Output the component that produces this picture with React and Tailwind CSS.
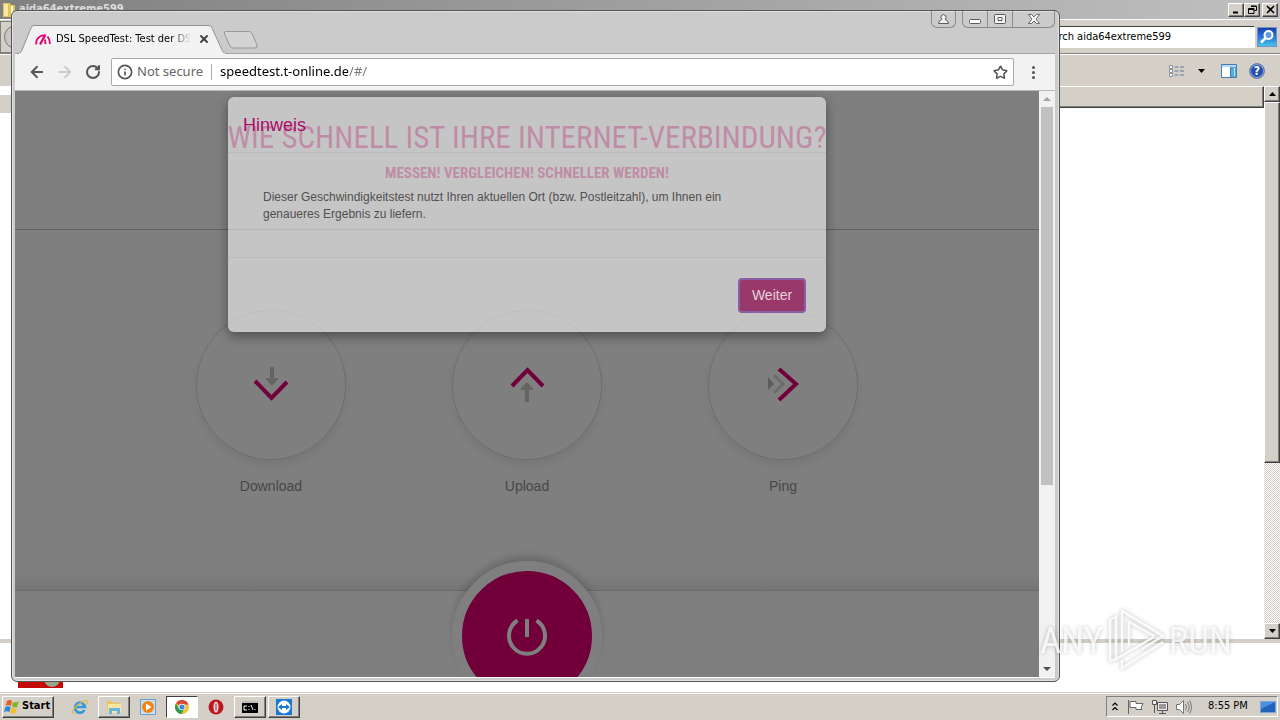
import React from 'react';
import { RotateCw, ArrowLeft, ArrowRight, Star, Info, X } from 'lucide-react';

const raised = 'bg-[#d4d0c8] border border-t-white border-l-white border-r-[#404040] border-b-[#404040] shadow-[inset_-1px_-1px_0_#808080]';

function CaptionButton({ label, children }) {
  return (
    <button aria-label={label} className={`flex h-[14px] w-4 items-center justify-center ${raised}`}>
      <svg className="h-[9px] w-[9px]" viewBox="0 0 9 9" fill="none" stroke="#000">{children}</svg>
    </button>
  );
}

function ScrollButton({ label, down }) {
  return (
    <button aria-label={label} className={`flex h-4 w-4 shrink-0 items-center justify-center ${raised}`}>
      <svg className="h-1 w-[7px]" viewBox="0 0 7 4"><path d={down ? 'M0 0H7L3.5 4Z' : 'M0 4H7L3.5 0Z'} /></svg>
    </button>
  );
}

function ExplorerWindow() {
  return (
    <section className="flex min-h-0 flex-1 flex-col bg-[#d4d0c8] font-['DejaVu_Sans_Condensed','DejaVu_Sans',sans-serif] text-[11px]">
      <header className="flex h-[19px] shrink-0 items-center gap-1 bg-linear-to-r from-[#808080] to-[#c0c0c0] pr-0.5 pl-[3px]">
        <svg className="h-4 w-3" viewBox="0 0 12 16"><path d="M0 1h7l1 2h4v12H0z" fill="#e2c35a" /><path d="M1 2h4v12H1z" fill="#f8e9a0" /><path d="M8 4h2v10H8z" fill="#fff7cf" /></svg>
        <h2 className="flex-1 font-bold text-[#dcdcdc]">aida64extreme599</h2>
        <div className="flex">
          <CaptionButton label="Minimize"><path d="M1 7.5h5" strokeWidth="2" /></CaptionButton>
          <CaptionButton label="Restore"><path d="M3 1h5.500M3 1.500h5.500v4h-2M.5 3.500h5.500v5H.5zM.5 4.500h5.500" /></CaptionButton>
          <span className="w-0.5" />
          <CaptionButton label="Close"><path d="M1 1l7 7M8 1l-7 7" strokeWidth="1.600" /></CaptionButton>
        </div>
      </header>
      <div className="flex h-[35px] shrink-0 items-center border-t border-b border-t-white border-b-[#808080] pr-[3px]">
        <button aria-label="Back" className="flex h-8 w-8 items-center justify-center border border-[#808080]"><span className="block h-6 w-6 rounded-full border border-[#777] bg-[#c8c6c0]" /></button>
        <input aria-label="Search" defaultValue="Search aida64extreme599" className="ml-auto h-[22px] w-[240px] border border-t-[#404040] border-r-white border-b-white border-l-[#404040] bg-white pl-6 text-black outline-none" />
        <button aria-label="Run search" className="ml-0.5 flex h-5 w-5 items-center justify-center border border-[#6e93c8] bg-linear-to-b from-[#1d3fae] via-[#2e72dc] to-[#49c5e8]">
          <svg className="h-4 w-4" viewBox="0 0 16 16" fill="#5b9bea" stroke="#fff" strokeWidth="2"><circle cx="9.500" cy="6" r="4" /><path d="M6.500 9L2 13.500" strokeWidth="2.500" /></svg>
        </button>
      </div>
      <div className="flex h-8 shrink-0 items-center justify-end border-t border-white pr-[15px]">
        <button aria-label="Change view" className="flex items-center gap-[13px]">
          <svg className="h-3 w-4" viewBox="0 0 16 12" fill="none"><path d="M.5 .5h3v3h-3zM.5 4.500h3v3h-3zM.5 8.500h3v3h-3z" stroke="#8c929c" fill="#fff" /><path d="M5.500 2h4M11 2h4M5.500 6h4M11 6h4M5.500 10h4M11 10h4" stroke="#61789b" /></svg>
          <svg className="h-1 w-[7px]" viewBox="0 0 7 4"><path d="M0 0H7L3.500 4Z" /></svg>
        </button>
        <button aria-label="Preview pane" className="ml-4">
          <svg className="h-[14px] w-4" viewBox="0 0 16 14"><path d="M.5 .5h15v13H.5z" fill="#fff" stroke="#3f7cb8" /><path d="M1 1h14v2H1z" fill="#b9d7ee" /><path d="M10 3h5v10h-5z" fill="#55acd8" /><path d="M9.500 3v10" stroke="#3f7cb8" /><path d="M13 4h1v8h-1z" fill="#b8e3f4" /></svg>
        </button>
        <button aria-label="Help" className="ml-3 flex h-4 w-4 items-center justify-center rounded-full border border-[#7385ad] bg-[#2450ad] text-[12px] font-bold text-white shadow-[inset_0_0_0_1px_#8da6d8]">?</button>
      </div>
      <div className="flex min-h-0 flex-1 bg-white">
        <aside className="w-[11px] pt-[9px]"><div className="h-[18px] bg-[#d4d0c8]" /></aside>
        <div className="flex-1"><div className="h-[22px] border-t border-r border-b border-t-white border-r-[#404040] border-b-[#404040] bg-[#d4d0c8] shadow-[inset_-1px_-1px_0_#808080]" /></div>
        <div className="flex w-4 flex-col bg-[conic-gradient(#fff_25%,#d4d0c8_25%_50%,#fff_50%_75%,#d4d0c8_75%)] bg-size-[2px_2px]">
          <ScrollButton label="Scroll up" />
          <div className={`h-[361px] ${raised}`} />
          <div className="flex-1" />
          <ScrollButton label="Scroll down" down />
        </div>
      </div>
      <footer className="flex h-[53px] shrink-0 items-start border-t-4 border-[#d4d0c8] bg-white pl-[18px]">
        <svg className="h-[45px] w-[45px]" viewBox="0 0 45 45"><path d="M0 0h45v45H0z" fill="#c40808" /><circle cx="34" cy="36" r="8" fill="#97a58b" /></svg>
      </footer>
    </section>
  );
}

function BrowserTabs() {
  const cap = 'flex items-center justify-center border-r border-[#8b8b8b] last:border-r-0';
  return (
    <div className="flex h-[42px] shrink-0 items-end">
      <div className="relative ml-[6px] flex h-7 w-[208px] items-center">
        <svg className="absolute inset-0 h-[29px] w-[208px]" viewBox="0 0 208 29" fill="none"><path d="M0 28.500C3 28 3 27 4 25L13 3Q14 .5 16 .5H191Q193 .5 194 3L204 25Q205 28 208 28.500" fill="#f2f2f2" stroke="#929292" /><path d="M1 28.500h206" stroke="#f2f2f2" /></svg>
        <svg className="relative ml-[17px] h-4 w-4" viewBox="0 0 16 16" fill="none" stroke="#e20074" strokeWidth="1.800"><path d="M1.200 13.500Q.8 8 5 5.500Q7 4.300 9 4.500" /><path d="M5 13.500L10.500 3.500" strokeWidth="2.200" /><path d="M10 8.500L10.500 13M12.500 5.500Q14.800 8 15 13" /></svg>
        <span className="relative ml-[5px] bg-linear-to-r from-black from-85% to-transparent bg-clip-text text-[11px] whitespace-nowrap text-transparent">DSL SpeedTest: Test der DS</span>
        <button aria-label="Close tab" className="relative mr-4 ml-auto"><X className="h-3 w-3 text-[#444]" strokeWidth={4} /></button>
      </div>
      <button aria-label="New tab" className="mb-1 -ml-[3px]"><svg className="h-[18px] w-9" viewBox="0 0 36 18"><path d="M3 .5H26Q28 .5 29 2.500L34 14Q35 17 32 17H10Q8 17 7 15L1.500 3Q.5 .5 3 .5Z" fill="#d3d3d3" stroke="#989898" /></svg></button>
      <div className="mr-1 ml-auto flex gap-[6px] self-start text-[#5b5b5b]">
        <button aria-label="Profile" className="flex h-[17px] w-[25px] items-center justify-center rounded-b-md border border-t-0 border-[#8b8b8b]"><svg className="h-[10px] w-[11px]" viewBox="0 0 11 10" fill="#f1f1f1" stroke="currentColor"><path d="M3.800 5.500Q2.500 3.500 3.200 1.800Q5.500-.8 7.800 1.800Q8.500 3.500 7.200 5.500Q10.500 6.500 10.500 9.500H.5Q.5 6.500 3.800 5.500Z" /></svg></button>
        <div className="flex h-[17px] rounded-b-md border border-t-0 border-[#8b8b8b]">
          <button aria-label="Minimize" className={`w-[25px] ${cap}`}><svg className="h-[10px] w-3" viewBox="0 0 12 10"><rect x=".5" y="5.500" width="11" height="4" rx="1" fill="#fff" stroke="currentColor" /></svg></button>
          <button aria-label="Maximize" className={`w-[25px] ${cap}`}><svg className="h-[10px] w-3" viewBox="0 0 12 10" fill="#f1f1f1" stroke="currentColor"><rect x=".5" y=".5" width="11" height="9" rx="1" /><path d="M4 3.500h4v3H4z" /></svg></button>
          <button aria-label="Close" className={`w-[41px] ${cap}`}><svg className="h-[10px] w-3" viewBox="0 0 12 10"><path d="M.5 .5h3L6 3 8.500.5h3L8 5l3.500 4.500h-3L6 7 3.500 9.500h-3L4 5Z" fill="#fff" stroke="currentColor" strokeWidth=".9" /></svg></button>
        </div>
      </div>
    </div>
  );
}

function AddressBar() {
  return (
    <div className="flex h-[37px] shrink-0 items-center border-b border-[#b8b8b8] bg-[#f2f2f2] pr-[19px] pl-[13px] text-[#555]">
      <button aria-label="Back"><ArrowLeft className="h-[18px] w-[18px]" strokeWidth={2.5} /></button>
      <button aria-label="Forward" className="ml-[10px] text-[#ccc]"><ArrowRight className="h-[18px] w-[18px]" strokeWidth={2.5} /></button>
      <button aria-label="Reload" className="ml-[11px]"><RotateCw className="h-4 w-4" strokeWidth={3} /></button>
      <div className="ml-[10px] flex h-7 flex-1 items-center rounded-xs border border-[#a9a9a9] bg-white px-[5px] font-['Noto_Sans','Open_Sans',sans-serif] text-[13px]">
        <Info className="h-4 w-4" strokeWidth={2.5} />
        <label htmlFor="url" className="ml-1 text-[#666]">Not secure</label>
        <span className="ml-2 h-4 w-px bg-[#aaa]" />
        <input id="url" defaultValue="speedtest.t-online.de/#/" className="ml-2 flex-1 bg-[linear-gradient(to_right,#000_128px,#777_128px)] bg-clip-text text-transparent outline-none" />
        <button aria-label="Bookmark"><Star className="h-[15px] w-[15px]" strokeWidth={2.5} /></button>
      </div>
      <button aria-label="Menu" className="ml-4 flex w-[6px] flex-col items-center gap-0.5"><span className="h-[3px] w-[3px] rounded-full bg-[#555]" /><span className="h-[3px] w-[3px] rounded-full bg-[#555]" /><span className="h-[3px] w-[3px] rounded-full bg-[#555]" /></button>
    </div>
  );
}

function Gauge({ label, children }) {
  return (
    <div className="flex flex-1 flex-col items-center gap-4">
      <div className="flex h-[150px] w-[150px] items-center justify-center rounded-full border border-[#dcdcdc] bg-white shadow-[0_5px_10px_rgba(0,0,0,0.08)]">
        <svg className="h-9 w-9" viewBox="0 0 36 36" fill="none">{children}</svg>
      </div>
      <span className="text-[14px] leading-5 text-[#909090]">{label}</span>
    </div>
  );
}

function SpeedTestPage() {
  return (
    <main className="h-full overflow-hidden bg-white text-center font-['Liberation_Sans',Arial,sans-serif]">
      <header className="h-[139px] border-b border-[#c0c0c0] pt-[29px] text-[#e20074]">
        <h1 className="font-['Roboto_Condensed',Roboto,sans-serif] text-[31px] leading-9 whitespace-nowrap">WIE SCHNELL IST IHRE INTERNET-VERBINDUNG?</h1>
        <p className="mt-[7px] font-['Roboto_Condensed',Roboto,sans-serif] text-[15px] leading-5 font-bold">MESSEN! VERGLEICHEN! SCHNELLER WERDEN!</p>
      </header>
      <section className="flex h-[361px] justify-center border-b border-[#d4d4d4] bg-linear-to-t from-[#eaeaea] to-white to-[16px] pt-20">
        <div className="flex w-full max-w-3xl">
          <Gauge label="Download"><path d="M2 14L18.500 31L34 15" stroke="#e20074" strokeWidth="4" /><path d="M17 -1h4v12h5l-7 8-7-8h5z" fill="#c8c8c8" /></Gauge>
          <Gauge label="Upload"><path d="M3 19L18.500 3L34 19" stroke="#e20074" strokeWidth="4" /><path d="M16 35h4V23h5l-7-8-7 8h5z" fill="#c8c8c8" /></Gauge>
          <Gauge label="Ping"><path d="M14 2L31 17L14 33" stroke="#e20074" strokeWidth="4" /><path d="M9 8l9 9-9 9" stroke="#d4d4d4" strokeWidth="2.500" /><path d="M3 10l6 7-6 6z" fill="#b8b8b8" /></Gauge>
        </div>
      </section>
      <section className="flex justify-center">
        <button aria-label="Start test" className="relative -mt-[30px] flex h-[150px] w-[150px] items-center justify-center rounded-full border-10 border-white bg-[#e20074] shadow-[0_-6px_10px_-2px_rgba(0,0,0,0.22)]">
          <svg className="h-10 w-10" viewBox="0 0 40 40" fill="none" stroke="#fff" strokeWidth="4"><path d="M10.500 4.500A18 18 0 1 0 29.500 4.500M20 3v18" /></svg>
        </button>
      </section>
    </main>
  );
}

function NoticeDialog() {
  return (
    <div className="absolute inset-0 flex items-start justify-center bg-black/50 pt-[6px] font-['Liberation_Sans',Arial,sans-serif]">
      <div role="dialog" aria-labelledby="notice-title" className="w-[598px] max-w-full rounded-md bg-white/55 text-[#505050] shadow-[0_4px_12px_rgba(0,0,0,0.4)]">
        <h2 id="notice-title" className="h-14 border-b border-black/6 px-[15px] text-[18px] leading-[56px] text-[#ab0a67]">Hinweis</h2>
        <p className="h-[105px] border-b border-black/6 px-[35px] pt-9 text-[12px] leading-[17px]">Dieser Geschwindigkeitstest nutzt Ihren aktuellen Ort (bzw. Postleitzahl), um Ihnen ein<br />genaueres Ergebnis zu liefern.</p>
        <div className="flex h-[74px] items-center justify-end px-5"><button className="h-[35px] w-[68px] rounded-sm border-2 border-[#8a5fa3] bg-[#99396b] text-[14px] text-[#e6d3de]">Weiter</button></div>
      </div>
    </div>
  );
}

function BrowserWindow() {
  return (
    <section className="absolute top-[10px] right-[220px] bottom-[38px] left-[11px] flex flex-col rounded-md border border-[#555] bg-[#cbcbcb] font-['DejaVu_Sans_Condensed','DejaVu_Sans',sans-serif] shadow-[inset_0_0_0_1px_#e0e0e0]">
      <BrowserTabs />
      <div className="mr-1 mb-[3px] ml-[3px] flex min-h-0 flex-1 flex-col border-t border-t-[#a5a5a5]">
        <AddressBar />
        <div className="flex min-h-0 flex-1 border-b border-white">
          <div className="relative min-w-0 flex-1"><SpeedTestPage /><NoticeDialog /></div>
          <div className="flex w-4 flex-col items-center bg-[#f1f1f1]">
            <svg className="my-[6px] h-1 w-2 shrink-0" viewBox="0 0 8 4"><path d="M0 4H8L4 0Z" fill="#a3a3a3" /></svg>
            <div className="h-[378px] w-3 bg-[#c1c1c1]" />
            <svg className="mt-auto mb-[6px] h-1 w-2 shrink-0" viewBox="0 0 8 4"><path d="M0 0H8L4 4Z" fill="#505050" /></svg>
          </div>
        </div>
      </div>
    </section>
  );
}

function TaskIcon({ label, active, open, children }) {
  const look = active ? 'border border-t-[#404040] border-l-[#404040] border-r-white border-b-white bg-white' : open ? raised : '';
  return <button aria-label={label} className={`flex h-[22px] w-8 items-center justify-center ${look}`}><svg className="h-4 w-4" viewBox="0 0 16 16">{children}</svg></button>;
}

function Taskbar() {
  return (
    <nav className="flex h-7 shrink-0 items-center border-t border-[#d4d0c8] bg-[#d4d0c8] px-0.5 font-['DejaVu_Sans_Condensed','DejaVu_Sans',sans-serif] text-[11px] shadow-[inset_0_1px_0_#fff]">
      <button className={`flex h-[22px] w-[52px] items-center gap-0.5 px-px font-bold ${raised}`}>
        <svg className="h-4 w-4 shrink-0" viewBox="0 0 16 16"><path d="M3 2Q6 0 8 2L7 7Q4 5 1.500 7Z" fill="#e95c26" /><path d="M9 3Q12 4 15 2L13 8Q11 9 8 7.500Z" fill="#82b827" /><path d="M1.500 8Q4 6.500 6.500 8L5.500 13Q3 11.500 0 13Z" fill="#2e84d8" /><path d="M7.500 8.500Q10 10 13 9L11.500 14Q9 15.500 6.500 13.500Z" fill="#f8bd24" /></svg>
        Start
      </button>
      <div className="ml-[10px] flex gap-0.5">
        <TaskIcon label="Internet Explorer"><path d="M12.500 11A5 5 0 1 1 13 8H4" fill="none" stroke="#2d9bdb" strokeWidth="2.600" /><path d="M2 15Q-2 12 7 5Q14 0 15 2Q16 3 14 6" fill="none" stroke="#e8b63c" strokeWidth="1.300" /></TaskIcon>
        <TaskIcon label="Explorer" open><path d="M1 2h5l1 2h7v10H1z" fill="#e9c45b" /><path d="M2 5h13v9H2z" fill="#f8e6a0" /><path d="M3 15V9h11v6h-3v-3H6v3z" fill="#67b5df" /></TaskIcon>
        <TaskIcon label="Media Player"><path d="M.5 .5h15v15H.5z" fill="#c9e0f4" stroke="#6f9cc8" /><circle cx="8" cy="8" r="6" fill="#f18412" /><path d="M6 4.500l5.500 3.500L6 11.500z" fill="#fff" /></TaskIcon>
        <TaskIcon label="Chrome" active><circle cx="8" cy="8" r="7" fill="#f2c32e" /><path d="M8 8L2 4.200A7 7 0 0 1 14.500 5.500H8z" fill="#db4639" /><path d="M8 8L5 10 1.900 4.500A7 7 0 0 0 7.500 15L10 10z" fill="#279b56" /><circle cx="8" cy="8" r="3.300" fill="#fff" /><circle cx="8" cy="8" r="2.600" fill="#4284ea" /></TaskIcon>
        <TaskIcon label="Opera"><circle cx="8" cy="8" r="7.500" fill="#bb1822" /><ellipse cx="8" cy="8" rx="2.500" ry="5.500" fill="#f0dada" /><path d="M8 4.500v7" stroke="#a81720" strokeWidth="1" /></TaskIcon>
        <TaskIcon label="Command Prompt" open><path d="M0 2h16v12H0z" fill="#000" /><path d="M0 2h16v2H0z" fill="#bbb" /><path d="M5 7H2v4h3M7 7v1M7 10v1M9 6l2 5M13 10v1" stroke="#fff" fill="none" /></TaskIcon>
        <TaskIcon label="TeamViewer" open><path d="M0 0h16v16H0z" fill="#1877d2" /><circle cx="8" cy="8" r="6.500" fill="#fff" /><path d="M2 8l4-3v2h4V5l4 3-4 3V9H6v2z" fill="#1877d2" /></TaskIcon>
      </div>
      <div className="ml-auto flex h-[21px] w-[172px] items-center border border-t-[#808080] border-r-white border-b-white border-l-[#808080] pr-px pl-[5px]">
        <svg className="h-[9px] w-[6px]" viewBox="0 0 6 9" fill="none" stroke="#000" strokeWidth="1.200"><path d="M.5 3.500L3 1l2.500 2.500M.5 8L3 5.500 5.500 8" /></svg>
        <svg className="ml-[10px] h-4 w-4" viewBox="0 0 16 16" fill="#fff" stroke="#666"><path d="M.5 1v14M2 2.500h6v2h7l-2 4 1 2H8v-2H2z" /></svg>
        <svg className="ml-2 h-4 w-4" viewBox="0 0 16 16" fill="#eee" stroke="#555"><path d="M5.500 3.500h10v8h-10z" /><path d="M7 5h7v5H7z" fill="#999" stroke="none" /><path d="M.5 1.500h4v4h-4zM2.500 6v8M7 14.500h7M10.500 12v2" /></svg>
        <svg className="ml-2 h-4 w-4" viewBox="0 0 16 16" fill="none" stroke="#777"><path d="M.5 5.500h3l4-4v13l-4-4h-3z" fill="#fff" /><path d="M9.500 5q2 3 0 6M11.500 3q3.500 5 0 10M13.500 1.500q4 6.500 0 13" /></svg>
        <time className="ml-4 whitespace-nowrap">8:55 PM</time>
        <svg className="ml-auto h-3 w-4" viewBox="0 0 16 12"><path d="M.5 .5h15v11H.5z" fill="#2461bd" stroke="#7da3d6" /><path d="M1 1h14L1 8z" fill="#4a91e2" /></svg>
      </div>
    </nav>
  );
}

function Watermark() {
  return (
    <div aria-hidden="true" className="pointer-events-none absolute right-12 bottom-[48px] flex h-[64px] w-[192px] items-center justify-between font-['Roboto_Condensed',Roboto,sans-serif] text-[37px] leading-none text-white/80 [filter:drop-shadow(0_0_2px_rgba(0,0,0,0.3))]">
      <span>ANY</span>
      <svg className="h-[64px] w-14 shrink-0" viewBox="0 0 56 64" fill="none" stroke="#fff" strokeWidth="2.500" strokeOpacity=".85"><path d="M14 44V3L55 28 34 41M21 13V38M21 14L46 28M8 9L2 12V53L8 51V9ZM8 51L46 29M14 52V60L55 34" /></svg>
      <span>RUN</span>
    </div>
  );
}

export default function App() {
  return (
    <div className="relative flex h-screen w-full flex-col overflow-hidden bg-white text-black">
      <ExplorerWindow />
      <Taskbar />
      <BrowserWindow />
      <Watermark />
    </div>
  );
}
